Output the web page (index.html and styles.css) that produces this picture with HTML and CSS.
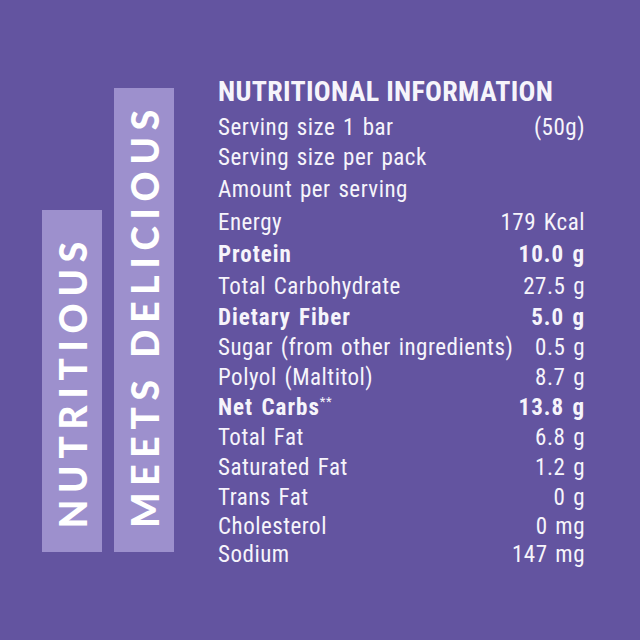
FILE: index.html
```html
<!DOCTYPE html>
<html>
<head>
<meta charset="utf-8">
<link rel="stylesheet" href="styles.css">
</head>
<body>
<main class="panel">
  <div class="bars">
    <div class="bar bar-short"><span class="bar-text">NUTRITIOUS</span></div>
    <div class="bar bar-tall"><span class="bar-text">MEETS DELICIOUS</span></div>
  </div>
  <section class="facts">
    <h1 class="title">NUTRITIONAL INFORMATION</h1>
    <div class="rows">
      <div class="row"><span>Serving size 1 bar</span><span>(50g)</span></div>
      <div class="row"><span>Serving size per pack</span><span></span></div>
      <div class="row"><span>Amount per serving</span><span></span></div>
      <div class="row"><span>Energy</span><span>179 Kcal</span></div>
      <div class="row bold"><span>Protein</span><span>10.0 g</span></div>
      <div class="row"><span>Total Carbohydrate</span><span>27.5 g</span></div>
      <div class="row bold"><span>Dietary Fiber</span><span>5.0 g</span></div>
      <div class="row"><span>Sugar (from other ingredients)</span><span>0.5 g</span></div>
      <div class="row"><span>Polyol (Maltitol)</span><span>8.7 g</span></div>
      <div class="row bold"><span>Net Carbs<sup class="star">**</sup></span><span>13.8 g</span></div>
      <div class="row"><span>Total Fat</span><span>6.8 g</span></div>
      <div class="row"><span>Saturated Fat</span><span>1.2 g</span></div>
      <div class="row"><span>Trans Fat</span><span>0 g</span></div>
      <div class="row"><span>Cholesterol</span><span>0 mg</span></div>
      <div class="row"><span>Sodium</span><span>147 mg</span></div>
    </div>
  </section>
</main>
</body>
</html>
```
FILE: styles.css
```css
html, body {
  margin: 0;
  padding: 0;
  background: #6354a0;
}
.panel {
  width: 640px;
  height: 640px;
  display: flex;
  align-items: flex-start;
  padding: 0 0 0 42px;
  box-sizing: border-box;
  color: #f6f4fb;
}
.bars {
  display: flex;
  align-items: flex-end;
  gap: 12px;
  height: 552px;
}
.bar {
  width: 60px;
  background: #9d90cd;
  display: flex;
  flex-direction: column;
  justify-content: flex-end;
  align-items: center;
  padding-bottom: 24px;
  box-sizing: border-box;
}
.bar-short { height: 342px; }
.bar-tall { height: 464px; }
.bar-text {
  writing-mode: vertical-rl;
  transform: rotate(180deg);
  font-family: Lato, "Open Sans", sans-serif;
  font-weight: 900;
  font-size: 37px;
  letter-spacing: 6.8px;
  line-height: 1;
  color: #ffffff;
  white-space: nowrap;
}
.facts {
  margin-left: 44px;
  width: 367px;
  font-family: "Roboto Condensed", Roboto, sans-serif;
  font-stretch: 75%;
}
.title {
  margin: 0;
  padding-top: 76px;
  font-size: 28px;
  line-height: 32px;
  font-weight: 700;
  letter-spacing: 0.3px;
  white-space: nowrap;
}
.rows {
  margin-top: 4px;
  display: grid;
  grid-template-rows: 30px 31px 32.5px 33px 32px 31.5px 31px 29.5px 30px 30px 29.5px 30px 30px 28.5px 27px;
}
.row {
  display: flex;
  align-items: center;
  justify-content: space-between;
  font-size: 23px;
  line-height: 1;
  letter-spacing: 0.5px;
  word-spacing: 2px;
  font-weight: 400;
  white-space: nowrap;
}
.row.bold {
  font-weight: 700;
  letter-spacing: 1px;
}
.star {
  font-size: 13px;
  vertical-align: top;
  line-height: 1;
  position: relative;
  top: -1px;
  font-weight: 400;
  letter-spacing: 0.5px;
}
```
